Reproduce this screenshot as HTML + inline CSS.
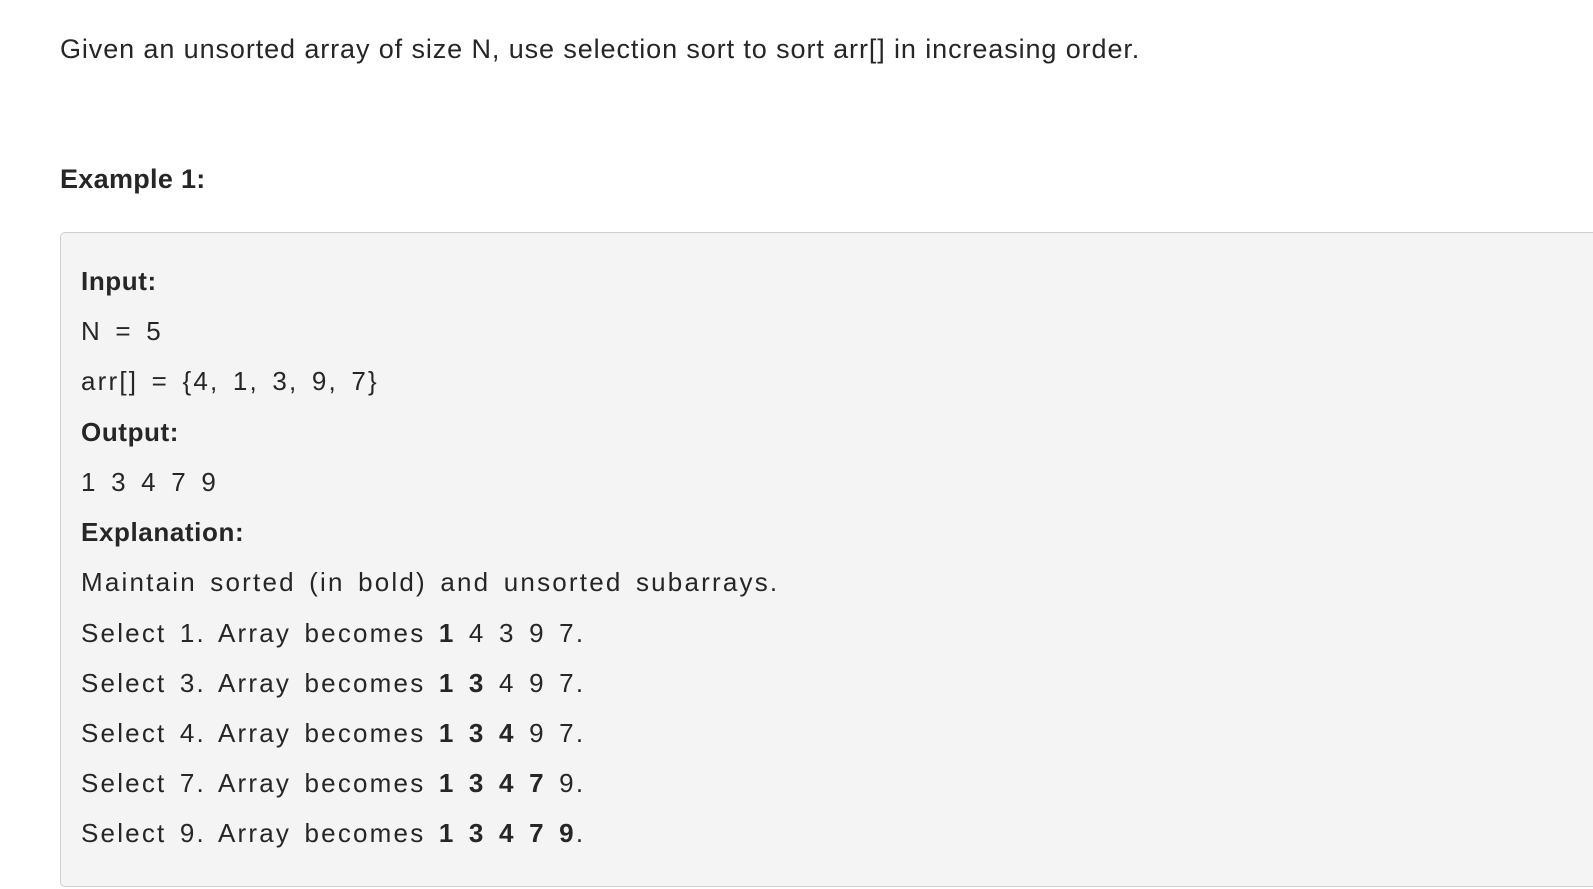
<!DOCTYPE html>
<html><head><meta charset="utf-8"><style>
html,body{margin:0;padding:0;background:#fff;width:1593px;height:889px;overflow:hidden}
body{font-family:"Liberation Sans",sans-serif;color:#262626;position:relative}
.p{position:absolute;left:60px;top:34px;font-size:27px;white-space:nowrap;letter-spacing:0.9px}
.h{position:absolute;left:60px;top:164px;font-size:27px;font-weight:bold;letter-spacing:0.3px}
.box{position:absolute;left:60px;top:232px;width:1560px;height:655px;background:#f4f4f4;border:1.5px solid #cfcfcf;border-radius:5px;box-sizing:border-box}
.l{position:absolute;left:81px;font-size:26px;white-space:pre;letter-spacing:2.2px;word-spacing:4px;line-height:1}
b{font-weight:bold}
</style></head><body>
<div class="p">Given an unsorted array of size N, use selection sort to sort arr[] in increasing order.</div>
<div class="h">Example 1:</div>
<div class="box"></div>
<div class="l" style="top:268px"><b style="letter-spacing:0.6px">Input:</b></div>
<div class="l" style="top:318px">N = 5</div>
<div class="l" style="top:368px">arr[] = {4, 1, 3, 9, 7}</div>
<div class="l" style="top:419px"><b style="letter-spacing:0.6px">Output:</b></div>
<div class="l" style="top:469px">1 3 4 7 9</div>
<div class="l" style="top:519px"><b style="letter-spacing:0.6px">Explanation:</b></div>
<div class="l" style="top:569px">Maintain sorted (in bold) and unsorted subarrays.</div>
<div class="l" style="top:620px">Select 1. Array becomes <b>1</b> 4 3 9 7.</div>
<div class="l" style="top:670px">Select 3. Array becomes <b>1 3</b> 4 9 7.</div>
<div class="l" style="top:720px">Select 4. Array becomes <b>1 3 4</b> 9 7.</div>
<div class="l" style="top:770px">Select 7. Array becomes <b>1 3 4 7</b> 9.</div>
<div class="l" style="top:820px">Select 9. Array becomes <b>1 3 4 7 9</b>.</div>
</body></html>
